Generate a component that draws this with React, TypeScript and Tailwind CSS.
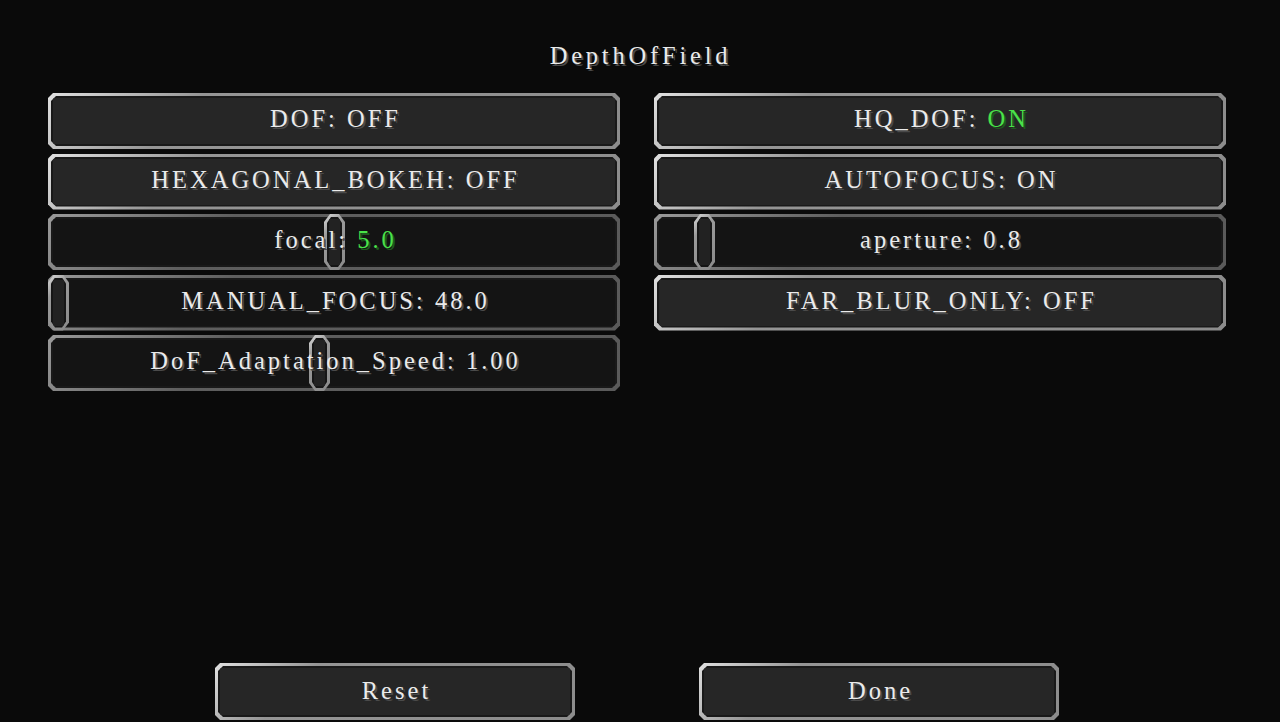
import type { ReactNode } from 'react'

const chamfer =
  '[clip-path:polygon(5px_0,calc(100%_-_5px)_0,100%_5px,100%_calc(100%_-_5px),calc(100%_-_5px)_100%,5px_100%,0_calc(100%_-_5px),0_5px)]'

const font = "font-['Liberation_Serif',serif] text-[24.5px] text-[#ebebeb] [text-shadow:2px_2px_0_#4a4a4a]"
const label = `${font} tracking-[3px]`

function Frame({ dark, children, className = '' }: { dark?: boolean; children?: ReactNode; className?: string }) {
  return (
    <div
      className={`${chamfer} ${className} p-[3px] ${
        dark
          ? 'bg-[linear-gradient(135deg,#9a9a9a,#5e5e5e_30%,#5a5a5a)]'
          : 'bg-[linear-gradient(135deg,#e0e0e0,#959595_25%,#8c8c8c)]'
      }`}
    >
      <div className={`${chamfer} h-full bg-[#191919] p-[2px]`}>
        <div className={`h-full ${dark ? 'bg-[#141414]' : 'bg-[#262626]'}`}>{children}</div>
      </div>
    </div>
  )
}

function Green({ children }: { children: ReactNode }) {
  return <span className="text-[#4ae24a] [text-shadow:2px_2px_0_#1d5a1d]">{children}</span>
}

function Button({ children }: { children: ReactNode }) {
  return (
    <Frame className="h-[56px]">
      <div className={`${label} flex h-full items-center justify-center pb-[3px] pl-[3px]`}>
        <span>{children}</span>
      </div>
    </Frame>
  )
}

function Slider({ thumb, children }: { thumb: string; children: ReactNode }) {
  return (
    <div className="relative h-[56px]">
      <Frame dark className="h-full" />
      <div className={`absolute top-0 h-full w-[21px] ${thumb}`}>
        <div
          className={`h-full p-[3px] bg-[linear-gradient(135deg,#dcdcdc,#9a9a9a_30%,#8a8a8a)] [clip-path:polygon(6px_0,calc(100%_-_6px)_0,100%_8px,100%_calc(100%_-_8px),calc(100%_-_6px)_100%,6px_100%,0_calc(100%_-_8px),0_8px)]`}
        >
          <div className="h-full bg-[#161616] p-[2px] [clip-path:polygon(4px_0,calc(100%_-_4px)_0,100%_6px,100%_calc(100%_-_6px),calc(100%_-_4px)_100%,4px_100%,0_calc(100%_-_6px),0_6px)]">
            <div className="h-full bg-[#222222]" />
          </div>
        </div>
      </div>
      <div className={`${label} absolute inset-0 flex items-center justify-center pb-[3px] pl-[3px]`}>
        <span>{children}</span>
      </div>
    </div>
  )
}

export default function App() {
  return (
    <div className="flex h-[722px] w-[1280px] flex-col overflow-hidden bg-[#0a0a0a]">
      <div className={`${font} mt-[42px] h-[28px] text-center leading-[28px] pl-[1px] tracking-[3.8px]`}>
        DepthOfField
      </div>

      <div className="mt-[23px] grid grid-cols-[572px_572px] gap-x-[34px] gap-y-[4.5px] pl-[48px]">
        <Button>DOF: OFF</Button>
        <Button>
          HQ_DOF: <Green>ON</Green>
        </Button>
        <Button>HEXAGONAL_BOKEH: OFF</Button>
        <Button>AUTOFOCUS: ON</Button>
        <Slider thumb="left-[276px]">
          focal: <Green>5.0</Green>
        </Slider>
        <Slider thumb="left-[40px]">aperture: 0.8</Slider>
        <Slider thumb="left-0">MANUAL_FOCUS: 48.0</Slider>
        <Button>FAR_BLUR_ONLY: OFF</Button>
        <Slider thumb="left-[261px]">DoF_Adaptation_Speed: 1.00</Slider>
      </div>

      <div className="flex-1" />

      <div className="mb-[2px] flex gap-[124px] pl-[215px]">
        <div className="w-[360px]">
          <Frame className="h-[57px]">
            <div className={`${label} flex h-full items-center justify-center pb-[1px] pl-[3px]`}>Reset</div>
          </Frame>
        </div>
        <div className="w-[360px]">
          <Frame className="h-[57px]">
            <div className={`${label} flex h-full items-center justify-center pb-[1px] pl-[3px]`}>Done</div>
          </Frame>
        </div>
      </div>
    </div>
  )
}
